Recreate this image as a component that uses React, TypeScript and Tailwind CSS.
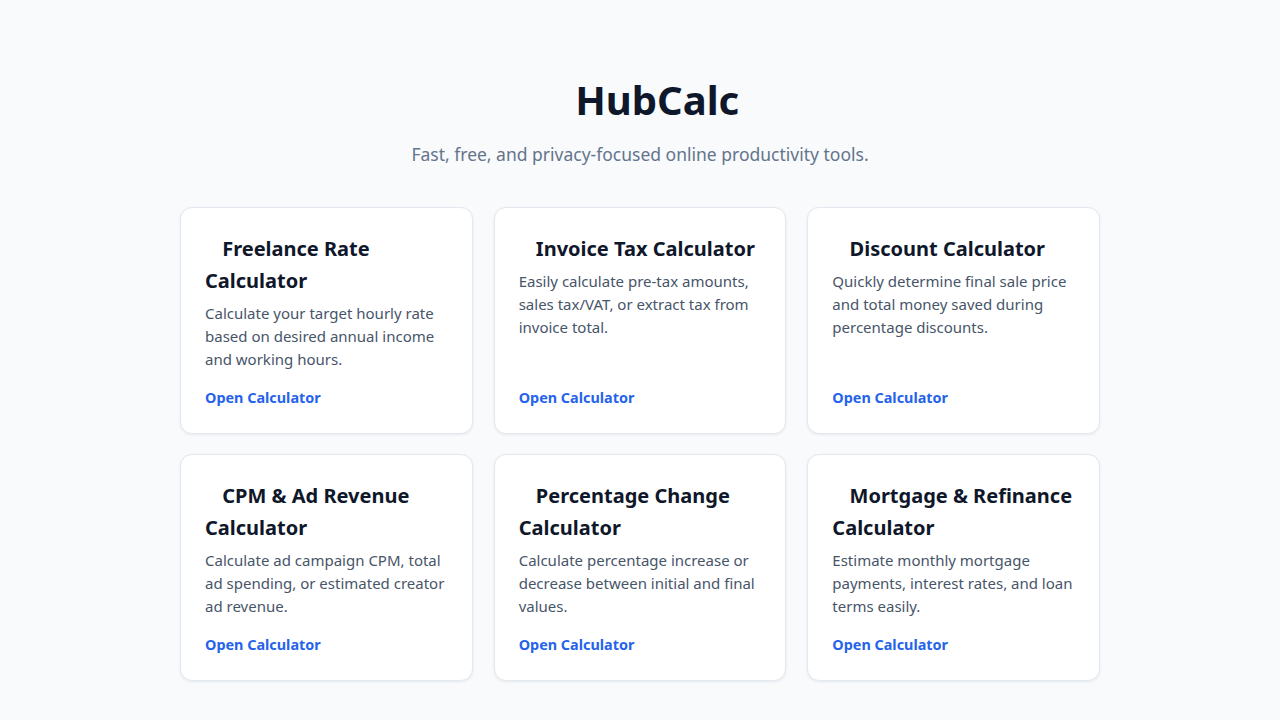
const tools = [
  {
    title: "Freelance Rate Calculator",
    desc: "Calculate your target hourly rate based on desired annual income and working hours.",
  },
  {
    title: "Invoice Tax Calculator",
    desc: "Easily calculate pre-tax amounts, sales tax/VAT, or extract tax from invoice total.",
  },
  {
    title: "Discount Calculator",
    desc: "Quickly determine final sale price and total money saved during percentage discounts.",
  },
  {
    title: "CPM & Ad Revenue Calculator",
    desc: "Calculate ad campaign CPM, total ad spending, or estimated creator ad revenue.",
  },
  {
    title: "Percentage Change Calculator",
    desc: "Calculate percentage increase or decrease between initial and final values.",
  },
  {
    title: "Mortgage & Refinance Calculator",
    desc: "Estimate monthly mortgage payments, interest rates, and loan terms easily.",
  },
];

// the emoji in front of each title has no glyph here, so it shows as a blank gap
function Blank() {
  return <span className="inline-block w-[0.6em]"></span>;
}

function ToolCard({ title, desc }: { title: string; desc: string }) {
  return (
    <div className="flex flex-col bg-white border border-[#e2e8f0] rounded-xl shadow-[0_1px_3px_rgba(15,23,42,0.07)] px-6 pt-[25px] pb-[25px]">
      <h2 className="text-[20px] leading-[32px] font-bold text-[#0f172a] mb-[5px]">
        <Blank /> {title}
      </h2>
      <p className="text-[15px] leading-[23px] text-[#475569] mb-4">{desc}</p>
      <a href="#" className="mt-auto text-[14.4px] leading-[21px] font-bold text-[#2563eb]">
        Open Calculator
      </a>
    </div>
  );
}

export default function App() {
  return (
    <div className="min-h-screen bg-[#f8fafc] font-['Noto_Sans',sans-serif]">
      <div className="max-w-[960px] mx-auto px-5 pt-[76px] pb-12">
        <h1 className="text-center text-[40px] leading-[48px] font-bold text-[#0f172a]">
          <Blank /> HubCalc
        </h1>
        <p className="text-center text-[17.5px] leading-[26px] text-[#64748b] mt-[17px]">
          Fast, free, and privacy-focused online productivity tools.
        </p>
        <div className="grid grid-cols-3 gap-x-[21px] gap-y-[20px] mt-[40px]">
          {tools.map((t) => (
            <ToolCard key={t.title} title={t.title} desc={t.desc} />
          ))}
        </div>
      </div>
    </div>
  );
}
